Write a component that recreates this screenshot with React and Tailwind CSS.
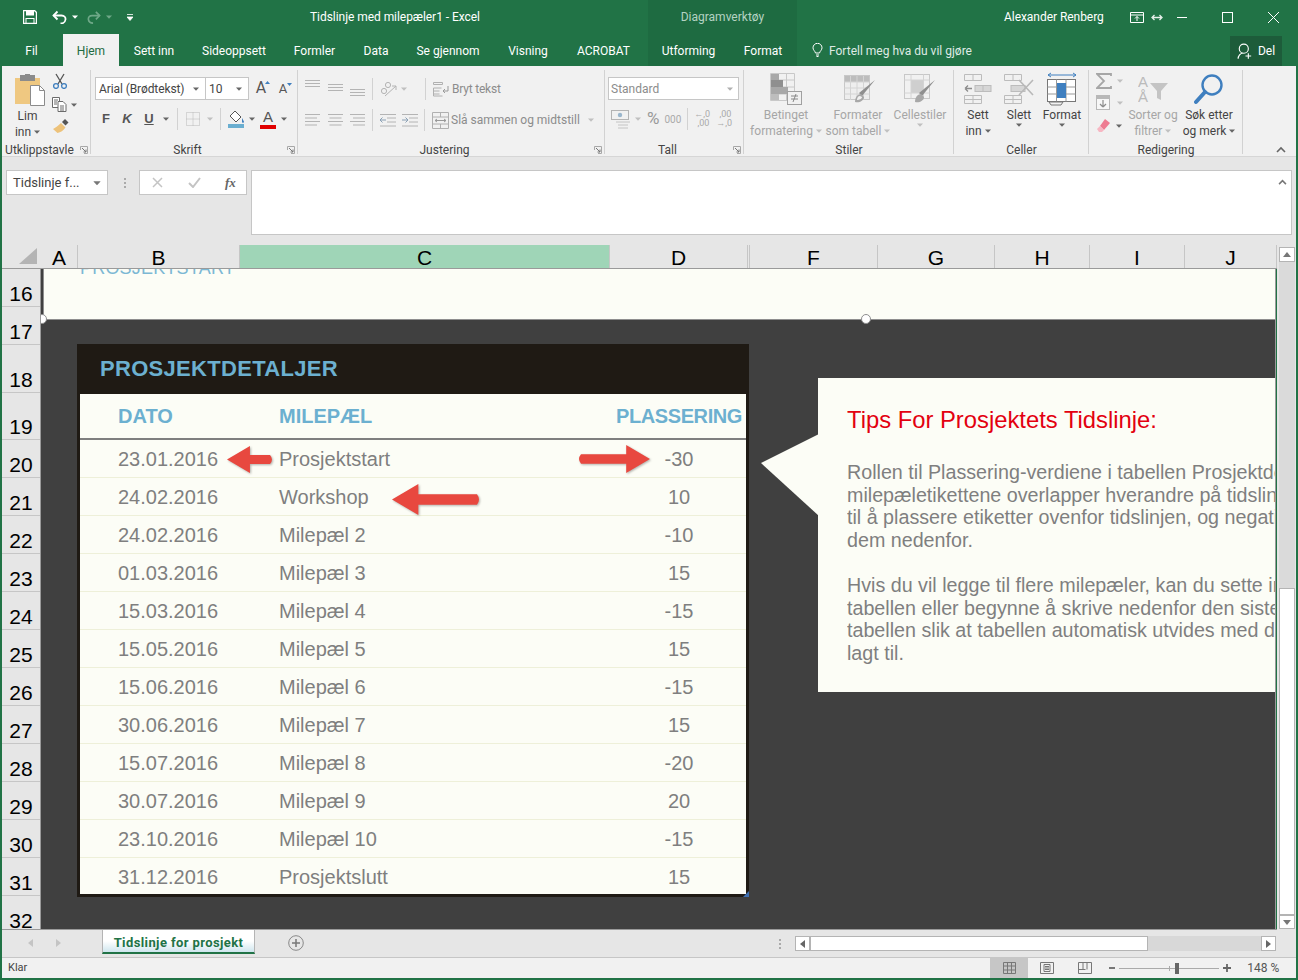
import React from 'react';

const UI = { fontFamily: 'Roboto, "Noto Sans", sans-serif' };
const ARIAL = { fontFamily: '"Liberation Sans", Arial, sans-serif' };

const milestones = [
  ['23.01.2016', 'Prosjektstart', '-30'],
  ['24.02.2016', 'Workshop', '10'],
  ['24.02.2016', 'Milepæl 2', '-10'],
  ['01.03.2016', 'Milepæl 3', '15'],
  ['15.03.2016', 'Milepæl 4', '-15'],
  ['15.05.2016', 'Milepæl 5', '15'],
  ['15.06.2016', 'Milepæl 6', '-15'],
  ['30.06.2016', 'Milepæl 7', '15'],
  ['15.07.2016', 'Milepæl 8', '-20'],
  ['30.07.2016', 'Milepæl 9', '20'],
  ['23.10.2016', 'Milepæl 10', '-15'],
  ['31.12.2016', 'Prosjektslutt', '15'],
];

const rowHeaders = [
  [16, 'h-[38px]'], [17, 'h-[38px]'], [18, 'h-[48px]'], [19, 'h-[47px]'],
  [20, 'h-[38px]'], [21, 'h-[38px]'], [22, 'h-[38px]'], [23, 'h-[38px]'],
  [24, 'h-[38px]'], [25, 'h-[38px]'], [26, 'h-[38px]'], [27, 'h-[38px]'],
  [28, 'h-[38px]'], [29, 'h-[38px]'], [30, 'h-[38px]'], [31, 'h-[38px]'],
  [32, 'h-[38px]'],
];

const colHeaders = [
  ['A', 'w-[37px]'], ['B', 'w-[162px]'], ['C', 'w-[370px] bg-[#9fd5b7]'], ['D', 'w-[138px]'],
  ['', 'w-[2px]'], ['F', 'w-[128px]'], ['G', 'w-[117px]'], ['H', 'w-[95px]'], ['I', 'w-[95px]'], ['J', 'w-[92px]'],
];

const Caret = ({ className = '', color = '#666' }) => (
  <svg width="6" height="4" viewBox="0 0 6 4" className={`inline-block shrink-0 ${className}`}>
    <path d="M0 0.5h6L3 3.8z" fill={color} />
  </svg>
);

const Launcher = () => (
  <svg width="8" height="8" viewBox="0 0 8 8" className="shrink-0">
    <path d="M.5 4V.5H7.5V7.5H4" fill="none" stroke="#a8a8a8" />
    <path d="M2 2l4 4M6 3.5V6H3.5" fill="none" stroke="#777" />
  </svg>
);

const Group = ({ width, label, launcher, children }) => (
  <div className={`${width} shrink-0 flex flex-col relative`}>
    <div className="h-[78px] relative">{children}</div>
    <div className="h-[12px] flex items-center text-[12px] leading-[14px] text-[#444]">
      <div className="flex-1 text-center">{label}</div>
      {launcher && <div className="w-[14px] flex justify-center"><Launcher /></div>}
    </div>
    <div className="absolute right-0 top-[4px] bottom-[2px] w-px bg-[#d2d2d2]" />
  </div>
);

const Sep = ({ className = '' }) => <div className={`w-px h-[22px] bg-[#d2d2d2] shrink-0 ${className}`} />;

const Lines = ({ align = 'left', offset = 0, className = '' }) => {
  const rows = [[0, 15], [1, 12], [2, 15], [3, 12]];
  return (
    <svg width="15" height="13" viewBox="0 0 15 13" className={`shrink-0 ${className}`}>
      {rows.map(([i, w]) => {
        const x = align === 'left' ? 0 : align === 'right' ? 15 - w : (15 - w) / 2;
        return <rect key={i} x={x} y={i * 3.5 + offset} width={w} height="1" fill="#b4b4b4" />;
      })}
    </svg>
  );
};

const VAlign = ({ y, className = '' }) => (
  <svg width="15" height="20" viewBox="0 0 15 20" className={`shrink-0 ${className}`}>
    {[0, 3, 6].map((d) => <rect key={d} x="0" y={y + d} width="15" height="1" fill="#b4b4b4" />)}
  </svg>
);

const Paste = () => (
  <svg width="32" height="32" viewBox="0 0 32 32">
    <rect x="1" y="4" width="25" height="26" fill="#efc881" />
    <rect x="6" y="1" width="15" height="6" fill="#8b8b8b" />
    <rect x="11" y="0" width="5" height="3" fill="#8b8b8b" />
    <path d="M16.5 11.5h9l5 5v15h-14z" fill="#fff" stroke="#8b8b8b" />
    <path d="M25.5 11.5v5h5" fill="none" stroke="#8b8b8b" />
  </svg>
);

const Scissors = () => (
  <svg width="16" height="16" viewBox="0 0 16 16">
    <path d="M4 1l6 10M12 1L6 11" stroke="#555" strokeWidth="1.3" fill="none" />
    <circle cx="4" cy="13" r="2.4" fill="none" stroke="#3f7fbf" strokeWidth="1.3" />
    <circle cx="12" cy="13" r="2.4" fill="none" stroke="#3f7fbf" strokeWidth="1.3" />
  </svg>
);

const Copy = () => (
  <svg width="15" height="15" viewBox="0 0 15 15">
    <path d="M.5 .5h7v10h-7z" fill="#fff" stroke="#6b6b6b" />
    <path d="M6 4.5h5l3 3v7H6z" fill="#fff" stroke="#6b6b6b" />
    <path d="M8 9h4M8 11h4M8 13h4M2 3h4M2 5h3M2 7h3" stroke="#6b6b6b" />
  </svg>
);

const Brush = () => (
  <svg width="18" height="16" viewBox="0 0 18 16">
    <path d="M10 4l3-3 3.5 3.5-3 3z" fill="#555" />
    <path d="M9 5l4.5 4.5c-2 3-5 5-8 5.5L1 11c2-1 5-3 8-6z" fill="#edc27a" />
  </svg>
);

const FontGrow = ({ small, className = '' }) => (
  <span className={`relative inline-flex w-[14px] justify-center text-[#555] ${small ? 'text-[13px]' : 'text-[16px]'} leading-none ${className}`}>
    A
    <svg width="5" height="4" viewBox="0 0 5 4" className="absolute right-[-2px] top-[1px]">
      <path d={small ? 'M0 0h5L2.5 3z' : 'M0 3h5L2.5 0z'} fill="#3f7fbf" />
    </svg>
  </span>
);

const Borders = ({ className = '' }) => (
  <svg width="14" height="14" viewBox="0 0 14 14" className={`shrink-0 ${className}`}>
    <path d="M.5 .5h13v13H.5zM7 .5v13M.5 7h13" fill="none" stroke="#b8b8b8" strokeDasharray="1 1" />
  </svg>
);

const Fill = ({ className = '' }) => (
  <svg width="17" height="19" viewBox="0 0 17 19" className={`shrink-0 ${className}`}>
    <path d="M7 1l6 6-5 5-6-6z" fill="#fff" stroke="#555" />
    <path d="M14 8c1 2 2 3 2 4s-2 1-2 0 0-2 0-4z" fill="#3f7fbf" />
    <rect x="0" y="14" width="16" height="4" fill="#6aaed0" />
  </svg>
);

const FontColor = ({ className = '' }) => (
  <span className={`relative inline-flex flex-col items-center w-[16px] ${className}`}>
    <span className="text-[15px] leading-[14px] font-medium text-[#555]">A</span>
    <span className="w-[16px] h-[4px] bg-[#e00000] mt-[1px]" />
  </span>
);

const Orientation = ({ className = '' }) => (
  <svg width="17" height="17" viewBox="0 0 17 17" className={`shrink-0 ${className}`}>
    <path d="M5 15L16 5M16 5h-4M16 5v4" fill="none" stroke="#b4b4b4" />
    <circle cx="4" cy="10" r="2.6" fill="none" stroke="#b4b4b4" />
    <circle cx="8" cy="4" r="2.6" fill="none" stroke="#b4b4b4" />
  </svg>
);

const WrapIcon = ({ className = '' }) => (
  <svg width="16" height="15" viewBox="0 0 16 15" className={`shrink-0 ${className}`}>
    <path d="M.5 .5h9v2h-9zM.5 6h8M.5 9h6M.5 12h6M.5 6v8h9" fill="none" stroke="#b0b0b0" />
    <path d="M15 4v5h-5M10 9l2-2M10 9l2 2" fill="none" stroke="#999" />
  </svg>
);

const MergeIcon = ({ className = '' }) => (
  <svg width="17" height="17" viewBox="0 0 17 17" className={`shrink-0 ${className}`}>
    <path d="M.5 .5h16v16H.5zM.5 5h16M.5 12h16M8.500 .5V5M8.500 12v4.500" fill="none" stroke="#b0b0b0" />
    <path d="M3 8.500h11M3 8.500l2-1.500M3 8.500l2 1.500M14 8.500l-2-1.500M14 8.500l-2 1.500" fill="none" stroke="#999" />
  </svg>
);

const Indent = ({ flip, className = '' }) => (
  <svg width="16" height="13" viewBox="0 0 16 13" className={`shrink-0 ${className}`}>
    <path d="M0 .5h16M7 4h9M7 8h9M0 12h16" stroke="#b4b4b4" />
    <path d={flip ? 'M0 6h6M6 6L3.500 3.500M6 6L3.500 8.500' : 'M0 6h6M0 6l2.500-2.500M0 6l2.500 2.500'} stroke="#8aa0b4" fill="none" />
  </svg>
);

const Money = ({ className = '' }) => (
  <svg width="21" height="19" viewBox="0 0 21 19" className={`shrink-0 ${className}`}>
    <rect x=".5" y=".5" width="17" height="9" fill="none" stroke="#b4b4b4" />
    <circle cx="9" cy="5" r="2.2" fill="#9ab6cc" />
    <path d="M5 12h14M7 15h10M7 18h10" stroke="#c4c4c4" />
  </svg>
);

const Decimals = ({ more, className = '' }) => (
  <span className={`inline-flex flex-col text-[9px] leading-[9px] text-[#aaa] w-[15px] ${className}`}>
    <span className="text-right">{more ? ',00' : '←,0'}</span>
    <span className="text-right">{more ? '→,0' : ',00'}</span>
  </span>
);

const CondFormat = () => (
  <svg width="32" height="32" viewBox="0 0 32 32">
    <path d="M.5 .5h24v27H.5zM8.500 .5v27M16.500 .5v27M.5 7h24M.5 14h24M.5 21h24" fill="none" stroke="#c8c8c8" />
    <rect x="1" y="1" width="8" height="6" fill="#a8a8a8" />
    <rect x="1" y="7" width="12" height="7" fill="#8f8f8f" />
    <rect x="1" y="14" width="17" height="7" fill="#a8a8a8" />
    <rect x="1" y="21" width="8" height="6" fill="#bdbdbd" />
    <rect x="17.500" y="18.500" width="14" height="13" fill="#f1f1f1" stroke="#a0a0a0" />
    <path d="M21 23h7M21 26h7M26 21l-3 8" stroke="#888" />
  </svg>
);

const TableFormat = () => (
  <svg width="32" height="32" viewBox="0 0 32 32">
    <rect x=".5" y="2.500" width="25" height="24" fill="#eee" stroke="#c8c8c8" />
    <rect x="1" y="3" width="24" height="6" fill="#bdbdbd" />
    <path d="M.5 9h25M.5 15h25M.5 21h25M6.500 3v24M13 3v24M19.500 3v24" stroke="#d4d4d4" fill="none" />
    <path d="M31 7L18 23l-3-3z" fill="#8f8f8f" />
    <path d="M17 21c-4 0-6 4-6 8 4 1 9-1 9-5z" fill="#a8a8a8" />
    <path d="M16 23c-2 0-3 2-3 4 2 0 5-1 5-3z" fill="#f1f1f1" />
  </svg>
);

const CellStyle = () => (
  <svg width="32" height="32" viewBox="0 0 32 32">
    <rect x=".5" y="1.500" width="25" height="24" fill="none" stroke="#c8c8c8" />
    <rect x="7" y="7" width="13" height="13" fill="#cfcfcf" />
    <path d="M.5 7h25M.5 20h25M7 1.500v24M19.500 1.500v24" stroke="#d4d4d4" fill="none" />
    <path d="M31 7L18 23l-3-3z" fill="#8f8f8f" />
    <path d="M17 21c-4 0-6 4-6 8 4 1 9-1 9-5z" fill="#a8a8a8" />
  </svg>
);

const InsertCells = () => (
  <svg width="28" height="30" viewBox="0 0 28 30">
    <path d="M.5 .5h17v6H.5zM9 .5v6M.5 21.500h17v8H.5zM9 21.500v8M.5 25.500h17" fill="none" stroke="#bcbcbc" />
    <rect x="11" y="11.500" width="16" height="6" fill="#d6d6d6" stroke="#bcbcbc" />
    <path d="M19 11.500v6" stroke="#bcbcbc" />
    <path d="M1 14.500h7M1 14.500l3-3M1 14.500l3 3" stroke="#8c8c8c" strokeWidth="1.300" fill="none" />
  </svg>
);

const DeleteCells = () => (
  <svg width="30" height="30" viewBox="0 0 30 30">
    <path d="M.5 .5h17v6H.5zM9 .5v6M.5 21.500h17v8H.5zM9 21.500v8M.5 25.500h17" fill="none" stroke="#bcbcbc" />
    <rect x="7" y="11.500" width="14" height="6" fill="#d6d6d6" stroke="#bcbcbc" />
    <path d="M15 6l14 15M29 6L15 21" stroke="#b8b8b8" strokeWidth="1.600" />
  </svg>
);

const FormatCells = () => (
  <svg width="30" height="34" viewBox="0 0 30 34">
    <path d="M1 2h28M1 2l3-2M1 2l3 2M29 2l-3-2M29 2l-3 2" stroke="#3f7fbf" fill="none" transform="translate(0 1)" />
    <rect x=".5" y="7.500" width="28" height="22" fill="#fff" stroke="#777" />
    <path d="M9.500 7.500v22M19 7.500v22M.5 15h28M.5 22h28" stroke="#999" />
    <rect x="10" y="11" width="9" height="15" fill="#3f7fbf" />
    <path d="M2 30h14l-2 3H4z" fill="#f1f1f1" stroke="#777" />
  </svg>
);

const Sigma = () => (
  <svg width="16" height="16" viewBox="0 0 16 16">
    <path d="M15 3V1H1l7 7-7 7h14v-2" fill="none" stroke="#a6a6a6" strokeWidth="1.800" />
  </svg>
);

const FillDown = () => (
  <svg width="14" height="15" viewBox="0 0 14 15">
    <rect x=".5" y=".5" width="13" height="14" fill="#f7f7f7" stroke="#b8b8b8" />
    <rect x="1" y="1" width="12" height="3" fill="#b8b8b8" />
    <path d="M7 5v7M7 12l-3-3M7 12l3-3" fill="none" stroke="#8c8c8c" strokeWidth="1.200" />
  </svg>
);

const Eraser = () => (
  <svg width="15" height="15" viewBox="0 0 15 15">
    <path d="M9 1l5 4-6 7-4-4z" fill="#ee7b91" />
    <path d="M4 8l4 4-2 2H3l-2-3z" fill="#f7b7c3" />
  </svg>
);

const SortFilter = () => (
  <svg width="31" height="30" viewBox="0 0 31 30">
    <text x="0" y="13" fontSize="15" fill="#bbb" style={ARIAL}>A</text>
    <text x="0" y="28" fontSize="15" fill="#bbb" style={ARIAL}>Å</text>
    <path d="M12 9h18l-7 8v9l-4-2v-7z" fill="#c4c4c4" />
  </svg>
);

const Search = () => (
  <svg width="30" height="32" viewBox="0 0 30 32">
    <circle cx="18" cy="12" r="9.500" fill="none" stroke="#3f7fbf" strokeWidth="2.400" />
    <path d="M11 19L2 29" stroke="#3f7fbf" strokeWidth="4" strokeLinecap="round" />
  </svg>
);

const BigButton = ({ icon, line1, line2, caret, muted, width, className = '' }) => (
  <div className={`flex flex-col items-center shrink-0 ${width} ${className}`}>
    <div className="h-[34px] flex items-center justify-center">{icon}</div>
    <div className={`text-[12px] leading-[16px] mt-[1px] whitespace-nowrap ${muted ? 'text-[#a6a6a6]' : 'text-[#444]'}`}>{line1}</div>
    <div className={`text-[12px] leading-[16px] whitespace-nowrap flex items-center gap-[3px] ${muted ? 'text-[#a6a6a6]' : 'text-[#444]'}`}>
      {line2}
      {caret && <Caret color={muted ? '#c0c0c0' : '#666'} />}
    </div>
  </div>
);

function TitleBar() {
  return (
    <div className="h-[34px] flex text-white text-[12px]">
      <div className="w-[648px] flex items-center relative">
        <svg width="14" height="14" viewBox="0 0 14 14" className="ml-[23px]">
          <path d="M.5 .5h11l2 2v11H.5z" fill="none" stroke="#fff" strokeWidth="1.400" />
          <rect x="3" y="1" width="8" height="4.500" fill="#fff" />
          <rect x="3" y="8.500" width="8" height="5" fill="none" stroke="#fff" />
        </svg>
        <svg width="15" height="14" viewBox="0 0 15 14" className="ml-[15px]">
          <path d="M1.500 5.500h8c6 0 5 8-1 8" fill="none" stroke="#fff" strokeWidth="1.800" />
          <path d="M5.500 1.500l-4 4 4 4" fill="none" stroke="#fff" strokeWidth="1.800" />
        </svg>
        <Caret color="#fff" className="ml-[5px]" />
        <svg width="14" height="14" viewBox="0 0 15 14" className="ml-[9px]">
          <path d="M13.500 5.500h-8c-6 0-5 8 1 8" fill="none" stroke="#6fa888" strokeWidth="1.800" />
          <path d="M9.500 1.500l4 4-4 4" fill="none" stroke="#6fa888" strokeWidth="1.800" />
        </svg>
        <Caret color="#6fa888" className="ml-[5px]" />
        <svg width="6" height="7" viewBox="0 0 6 7" className="ml-[15px]">
          <path d="M0 .5h6M0 3h6L3 6.500z" fill="#fff" stroke="#fff" strokeWidth=".8" />
        </svg>
        <div className="ml-[177px] whitespace-nowrap tracking-[-0.05px]">Tidslinje med milepæler1 - Excel</div>
      </div>
      <div className="w-[149px] bg-[#1e6b41] flex items-center justify-center text-[#b4d3c2]">Diagramverktøy</div>
      <div className="flex-1 flex items-center">
        <div className="ml-[207px] whitespace-nowrap tracking-[-0.05px]">Alexander Renberg</div>
        <svg width="14" height="11" viewBox="0 0 14 11" className="ml-[26px]">
          <path d="M.5 .5h13v10H.5zM.5 3h13" fill="none" stroke="#fff" />
          <path d="M7 9V4.500M5 6.500l2-2 2 2" fill="none" stroke="#fff" />
        </svg>
        <svg width="12" height="7" viewBox="0 0 12 7" className="ml-[7px]">
          <path d="M2 3.500h8M3.500 1L1 3.500 3.500 6M8.500 1L11 3.500 8.500 6" fill="none" stroke="#e8f0eb" strokeWidth="1.300" />
        </svg>
        <div className="w-[10px] h-px bg-white ml-[14px]" />
        <div className="w-[11px] h-[11px] border border-white ml-[35px]" />
        <svg width="11" height="11" viewBox="0 0 11 11" className="ml-[35px]">
          <path d="M0 0l11 11M11 0L0 11" stroke="#fff" />
        </svg>
      </div>
    </div>
  );
}

const tabs = [
  ['Fil', 'w-[63px]'], ['Hjem', 'w-[56px] bg-[#f1f1f1] text-[#1f6b41]'], ['Sett inn', 'w-[70px]'],
  ['Sideoppsett', 'w-[90px]'], ['Formler', 'w-[71px]'], ['Data', 'w-[52px]'], ['Se gjennom', 'w-[92px]'],
  ['Visning', 'w-[68px]'], ['ACROBAT', 'w-[83px] mr-[3px]'], ['Utforming', 'w-[81px] bg-[#1e6b41]'], ['Format', 'w-[68px] bg-[#1e6b41]'],
];

function TabBar() {
  return (
    <div className="h-[32px] flex text-white text-[12px]">
      {tabs.map(([name, cls]) => (
        <div key={name} className={`flex items-center justify-center pt-[1px] ${cls}`}>{name}</div>
      ))}
      <svg width="11" height="14" viewBox="0 0 11 14" className="ml-[15px] mt-[9px]">
        <path d="M3.500 10C3 8 1 7 1 4.800a4.500 4.500 0 0 1 9 0C10 7 8 8 7.500 10zM4 12h3M4.500 13.500h2" fill="none" stroke="#fff" />
      </svg>
      <div className="ml-[6px] pt-[1px] flex items-center text-[#dfeae4] whitespace-nowrap">Fortell meg hva du vil gjøre</div>
      <div className="ml-[258px] mt-[2px] w-[52px] h-[30px] bg-[#1d5c3a] flex items-center justify-center gap-[4px]">
        <svg width="17" height="17" viewBox="0 0 15 15">
          <circle cx="6" cy="5" r="4" fill="none" stroke="#fff" />
          <path d="M1 14c0-3 2-5 4-5M10 9v5M7.500 11.500h5" fill="none" stroke="#fff" />
        </svg>
        Del
      </div>
    </div>
  );
}

function Ribbon() {
  return (
    <div className="h-[91px] bg-[#f1f1f1] flex shrink-0 text-[#444] border-b border-[#d6d6d6]">
      <Group width="w-[89px]" label="Utklippstavle" launcher>
        <div className="flex">
          <div className="w-[50px] flex flex-col items-center pl-[1px] pt-[8px]">
            <div className="ml-[4px]"><Paste /></div>
            <div className="text-[12px] leading-[16px] mt-[2px]">Lim</div>
            <div className="text-[12px] leading-[16px] flex items-center gap-[3px]">inn <Caret /></div>
          </div>
          <div className="flex flex-col pt-[7px]">
            <Scissors />
            <div className="flex items-center gap-[4px] mt-[8px]"><Copy /><Caret /></div>
            <div className="mt-[6px]"><Brush /></div>
          </div>
        </div>
      </Group>

      <Group width="w-[207px]" label="Skrift" launcher>
        <div className="flex items-center mt-[11px] ml-[4px] h-[22px]">
          <div className="w-[111px] h-[23px] bg-white border border-[#c6c6c6] flex items-center pl-[3px] pr-[6px] pt-[1px] justify-between text-[12px] tracking-[-0.1px]">
            Arial (Brødtekst) <Caret />
          </div>
          <div className="w-[43px] h-[23px] bg-white border border-l-0 border-[#c6c6c6] flex items-center pl-[3px] pr-[6px] pt-[1px] justify-between text-[12px]">
            10 <Caret />
          </div>
          <FontGrow className="ml-[5px]" />
          <FontGrow small className="ml-[8px]" />
        </div>
        <div className="flex items-center mt-[9px] h-[22px] text-[13px]" style={ARIAL}>
          <span className="ml-[10px] font-bold w-[10px] text-center text-[#555]">F</span>
          <span className="ml-[11px] font-bold italic w-[10px] text-center text-[#555]">K</span>
          <span className="ml-[12px] font-bold underline w-[10px] text-center text-[#555]">U</span>
          <Caret className="ml-[9px]" />
          <Sep className="ml-[8px]" />
          <Borders className="ml-[8px]" />
          <Caret color="#c0c0c0" className="ml-[7px]" />
          <Sep className="ml-[7px]" />
          <Fill className="ml-[7px]" />
          <Caret className="ml-[4px]" />
          <FontColor className="ml-[5px]" />
          <Caret className="ml-[5px]" />
        </div>
      </Group>

      <Group width="w-[307px]" label="Justering" launcher>
        <div className="flex items-center mt-[11px] h-[24px]">
          <VAlign y={1} className="ml-[7px]" />
          <VAlign y={5} className="ml-[8px]" />
          <VAlign y={10} className="ml-[7px]" />
          <Sep className="ml-[7px]" />
          <Orientation className="ml-[7px]" />
          <Caret color="#c0c0c0" className="ml-[4px]" />
          <Sep className="ml-[18px]" />
          <WrapIcon className="ml-[7px]" />
          <span className="ml-[3px] text-[12px] text-[#8c8c8c] whitespace-nowrap tracking-[-0.2px]">Bryt tekst</span>
        </div>
        <div className="flex items-center mt-[8px] h-[22px]">
          <Lines className="ml-[7px]" />
          <Lines align="center" className="ml-[8px]" />
          <Lines align="right" className="ml-[7px]" />
          <Sep className="ml-[7px]" />
          <Indent className="ml-[7px]" />
          <Indent flip className="ml-[6px]" />
          <Sep className="ml-[6px]" />
          <MergeIcon className="ml-[7px]" />
          <span className="ml-[2px] text-[12px] text-[#8c8c8c] whitespace-nowrap">Slå sammen og midtstill</span>
          <Caret color="#c0c0c0" className="ml-[8px]" />
        </div>
      </Group>

      <Group width="w-[139px]" label="Tall" launcher>
        <div className="mt-[11px] ml-[3px] w-[131px] h-[23px] bg-white border border-[#c6c6c6] flex items-center justify-between pl-[2px] pr-[5px] text-[12px] text-[#8c8c8c]">
          Standard <Caret color="#b0b0b0" />
        </div>
        <div className="flex items-center mt-[8px] h-[22px]">
          <Money className="ml-[6px]" />
          <Caret color="#c0c0c0" className="ml-[3px]" />
          <span className="ml-[6px] text-[17px] text-[#999]">%</span>
          <span className="ml-[5px] text-[10px] text-[#aaa]">000</span>
          <Sep className="ml-[6px]" />
          <Decimals className="ml-[6px]" />
          <Decimals more className="ml-[7px]" />
        </div>
      </Group>

      <Group width="w-[210px]" label="Stiler">
        <div className="flex pt-[6px]">
          <BigButton muted caret width="w-[80px] ml-[2px]" icon={<CondFormat />} line1="Betinget" line2="formatering" />
          <BigButton muted caret width="w-[70px] -ml-[3px]" icon={<div className="ml-[3px]"><TableFormat /></div>} line1="Formater" line2="som tabell" />
          <BigButton muted width="w-[66px] -ml-[6px]" icon={<CellStyle />} line1="Cellestiler" line2={<Caret color="#c0c0c0" />} />
        </div>
      </Group>

      <Group width="w-[135px]" label="Celler">
        <div className="flex pt-[6px]">
          <BigButton caret width="w-[42px] ml-[3px]" icon={<InsertCells />} line1="Sett" line2="inn" />
          <BigButton width="w-[40px]" icon={<DeleteCells />} line1="Slett" line2={<Caret />} />
          <BigButton width="w-[46px]" icon={<FormatCells />} line1="Format" line2={<Caret />} />
        </div>
      </Group>

      <Group width="w-[154px]" label="Redigering">
        <div className="flex pt-[6px]">
          <div className="w-[36px] pl-[7px] pt-[1px] flex flex-col">
            <div className="flex items-center gap-[5px]"><Sigma /><Caret color="#c0c0c0" /></div>
            <div className="flex items-center gap-[7px] mt-[6px]"><FillDown /><Caret color="#c0c0c0" /></div>
            <div className="flex items-center gap-[5px] mt-[8px]"><Eraser /><Caret /></div>
          </div>
          <BigButton muted caret width="w-[56px]" icon={<SortFilter />} line1="Sorter og" line2="filtrer" />
          <BigButton caret width="w-[54px] ml-[1px]" icon={<Search />} line1="Søk etter" line2="og merk" />
        </div>
      </Group>

      <div className="flex-1 flex items-end justify-end pr-[10px] pb-[3px]">
        <svg width="10" height="7" viewBox="0 0 10 7">
          <path d="M1 6l4-4 4 4" fill="none" stroke="#666" strokeWidth="1.600" />
        </svg>
      </div>
    </div>
  );
}

function FormulaBar() {
  return (
    <div className="h-[88px] bg-[#e6e6e6] flex items-start pt-[13px] shrink-0">
      <div className="ml-[4px] w-[102px] h-[25px] bg-white border border-[#c6c6c6] flex items-center justify-between pl-[6px] pr-[7px] text-[13px] text-[#444]">
        Tidslinje f... <Caret color="#777" className="scale-125" />
      </div>
      <div className="ml-[15px] w-[3px] h-[25px] flex flex-col items-center justify-center gap-[2px]">
        <span className="w-[2px] h-[2px] bg-[#aaa]" />
        <span className="w-[2px] h-[2px] bg-[#aaa]" />
        <span className="w-[2px] h-[2px] bg-[#aaa]" />
      </div>
      <div className="ml-[13px] w-[108px] h-[25px] bg-white border border-[#c6c6c6] flex items-center">
        <svg width="11" height="11" viewBox="0 0 11 11" className="ml-[12px]">
          <path d="M1 1l9 9M10 1l-9 9" stroke="#c4c4c4" strokeWidth="1.500" />
        </svg>
        <svg width="13" height="11" viewBox="0 0 13 11" className="ml-[25px]">
          <path d="M1 6l4 4 7-9" fill="none" stroke="#c4c4c4" strokeWidth="2" />
        </svg>
        <span className="ml-[24px] text-[13px] italic font-bold text-[#666]" style={{ fontFamily: '"Liberation Serif", serif' }}>fx</span>
      </div>
      <div className="ml-[4px] w-[1041px] h-[65px] bg-white border border-[#c6c6c6] flex justify-end pt-[8px] pr-[4px]">
        <svg width="9" height="6" viewBox="0 0 10 7">
          <path d="M1 6l4-4 4 4" fill="none" stroke="#777" strokeWidth="1.800" />
        </svg>
      </div>
    </div>
  );
}

const Arrow = ({ w, h, flip, className }) => (
  <svg width={w} height={h} viewBox={`0 0 ${w} ${h}`} className={`absolute drop-shadow-[1px_1px_1px_rgba(0,0,0,0.3)] ${className}`}>
    <path
      d={`M0 ${h / 2} L${h * 0.85} 0 L${h * 0.85} ${h * 0.33} L${w - 4} ${h * 0.33} Q${w} ${h / 2} ${w - 4} ${h * 0.67} L${h * 0.85} ${h * 0.67} L${h * 0.85} ${h} Z`}
      fill="#e8483f"
      transform={flip ? `translate(${w} 0) scale(-1 1)` : undefined}
    />
  </svg>
);

function ProjectTable() {
  return (
    <div className="w-[672px] h-[553px] bg-[#1f1a14] shrink-0 relative" style={ARIAL}>
      <div className="h-[50px] flex items-center pl-[23px] pb-[2px] text-[22px] font-bold text-[#6cb0d0] tracking-[0.3px]">PROSJEKTDETALJER</div>
      <div className="mx-[3px] h-[500px] bg-[#fcfdf6] overflow-hidden text-[20px] text-[#7f7f7f]">
        <div className="h-[46px] grid grid-cols-[160px_370px_138px] items-center font-bold text-[#6cb0d0] border-b-2 border-[#7f7f7f]">
          <div className="pl-[38px]">DATO</div>
          <div className="pl-[39px]">MILEPÆL</div>
          <div className="text-center whitespace-nowrap tracking-[-0.4px]">PLASSERING</div>
        </div>
        {milestones.map(([date, name, pos], i) => (
          <div key={i} className="h-[38px] grid grid-cols-[160px_370px_138px] items-center border-b border-[#eef0d9]">
            <div className="pl-[38px]">{date}</div>
            <div className="pl-[39px]">{name}</div>
            <div className="text-center">{pos}</div>
          </div>
        ))}
      </div>
      <Arrow w={47} h={27} className="left-[150px] top-[102px]" />
      <Arrow w={89} h={31} className="left-[315px] top-[140px]" />
      <Arrow w={73} h={28} flip className="left-[500px] top-[101px]" />
      <svg width="6" height="6" viewBox="0 0 6 6" className="absolute right-0 bottom-0">
        <path d="M0 6L6 0v6z" fill="#3f6fb0" />
      </svg>
    </div>
  );
}

function Callout() {
  return (
    <div className="ml-[69px] mt-[34px] w-[458px] h-[314px] bg-[#fcfdf6] relative shrink-0 pl-[29px] pt-[26px] text-[#7f7f7f]" style={ARIAL}>
      <svg width="58" height="82" viewBox="0 0 58 82" className="absolute left-[-57px] top-[56px]">
        <path d="M58 0L0 29l58 53z" fill="#fcfdf6" />
      </svg>
      <div className="overflow-hidden">
        <div className="text-[23.8px] leading-[32px] text-[#e3000f] whitespace-nowrap">Tips For Prosjektets Tidslinje:</div>
        <div className="mt-[25px] text-[19.7px] leading-[22.700px] whitespace-nowrap">
          <div>Rollen til Plassering-verdiene i tabellen Prosjektdetaljer</div>
          <div>milepæletikettene overlapper hverandre på tidslinjen</div>
          <div>til å plassere etiketter ovenfor tidslinjen, og negative</div>
          <div>dem nedenfor.</div>
          <div className="mt-[22px]">Hvis du vil legge til flere milepæler, kan du sette inn</div>
          <div>tabellen eller begynne å skrive nedenfor den siste</div>
          <div>tabellen slik at tabellen automatisk utvides med de</div>
          <div>lagt til.</div>
        </div>
      </div>
    </div>
  );
}

function Sheet() {
  return (
    <div className="flex-1 min-w-0 flex flex-col" style={ARIAL}>
      <div className="h-[24px] bg-[#e6e6e6] flex shrink-0 border-b border-[#9a9a9a] relative">
        <div className="w-[39px] flex items-end justify-end pr-[4px] pb-[4px]">
          <svg width="18" height="16" viewBox="0 0 18 16"><path d="M18 0v16H0z" fill="#b4b4b4" /></svg>
        </div>
        {colHeaders.map(([name, cls], i) => (
          <div key={i} className={`${cls} shrink-0 flex items-start justify-center text-[21px] leading-[26px] text-black border-r border-[#c6c6c6]`}>{name}</div>
        ))}
      </div>
      <div className="h-[661px] flex overflow-hidden border-b border-[#9a9a9a]">
        <div className="w-[39px] shrink-0 bg-[#e6e6e6] border-r border-[#9a9a9a] overflow-hidden">
          {rowHeaders.map(([n, h]) => (
            <div key={n} className={`${h} flex items-end justify-center text-[21px] leading-[24px] text-black border-b border-[#c6c6c6]`}>{n}</div>
          ))}
        </div>
        <div className="w-[1235px] shrink-0 bg-[#404040] relative overflow-hidden border-r border-[#9a9a9a]">
          <div className="h-[51px] ml-[2px] bg-[#fcfdf6] border-l border-b border-[#8e8e8e] overflow-hidden">
            <div className="ml-[36px] -mt-[13px] text-[18px] leading-[24px] text-[#7cb8d4] tracking-[0.2px] whitespace-nowrap">PROSJEKTSTART</div>
          </div>
          <div className="flex pl-[36px] pt-[24px]">
            <ProjectTable />
            <Callout />
          </div>
          <span className="absolute left-[-4px] top-[45px] w-[10px] h-[10px] rounded-full bg-white border border-[#8e8e8e]" />
          <span className="absolute left-[820px] top-[45px] w-[10px] h-[10px] rounded-full bg-white border border-[#8e8e8e]" />
        </div>
      </div>
    </div>
  );
}

function VScroll() {
  return (
    <div className="w-[19px] bg-[#e6e6e6] shrink-0 pt-[2px] pl-[2px] pr-[1px] flex flex-col">
      <div className="h-[15px] bg-white border border-[#b4b4b4] flex items-center justify-center">
        <svg width="8" height="5" viewBox="0 0 8 5"><path d="M0 5l4-5 4 5z" fill="#777" /></svg>
      </div>
      <div className="h-[326px] bg-[#dadada]" />
      <div className="h-[327px] bg-white border border-[#b4b4b4]" />
      <div className="h-[14px] bg-white border border-[#b4b4b4] flex items-center justify-center">
        <svg width="8" height="5" viewBox="0 0 8 5"><path d="M0 0l4 5 4-5z" fill="#777" /></svg>
      </div>
    </div>
  );
}

function SheetTabs() {
  return (
    <div className="h-[27px] bg-[#e6e6e6] flex shrink-0 text-[12px]">
      <svg width="5" height="8" viewBox="0 0 5 8" className="ml-[26px] mt-[9px]"><path d="M5 0L0 4l5 4z" fill="#c4c4c4" /></svg>
      <svg width="5" height="8" viewBox="0 0 5 8" className="ml-[23px] mt-[9px]"><path d="M0 0l5 4-5 4z" fill="#c4c4c4" /></svg>
      <div className="ml-[41px] w-[153px] h-[24px] pt-[3px] bg-gradient-to-b from-white via-white to-[#cfe6ee] border-x border-[#b4b4b4] border-b-2 border-b-[#217346] flex items-center justify-center font-bold text-[#217346] text-[13px] tracking-[0.4px]" style={UI}>
        Tidslinje for prosjekt
      </div>
      <svg width="16" height="16" viewBox="0 0 16 16" className="ml-[33px] mt-[5px]">
        <circle cx="8" cy="8" r="7.300" fill="none" stroke="#888" />
        <path d="M8 4v8M4 8h8" stroke="#777" strokeWidth="1.500" />
      </svg>
      <div className="ml-[475px] mt-[9px] w-[2px] flex flex-col gap-[2px] items-center">
        <span className="w-[2px] h-[2px] bg-[#aaa]" />
        <span className="w-[2px] h-[2px] bg-[#aaa]" />
        <span className="w-[2px] h-[2px] bg-[#aaa]" />
      </div>
      <div className="ml-[14px] mt-[6px] h-[15px] flex">
        <div className="w-[15px] bg-white border border-[#b4b4b4] flex items-center justify-center">
          <svg width="5" height="8" viewBox="0 0 5 8"><path d="M5 0L0 4l5 4z" fill="#666" /></svg>
        </div>
        <div className="w-[338px] bg-white border border-[#b4b4b4]" />
        <div className="w-[113px] bg-[#d8d8d8]" />
        <div className="w-[15px] bg-white border border-[#b4b4b4] flex items-center justify-center">
          <svg width="5" height="8" viewBox="0 0 5 8"><path d="M0 0l5 4-5 4z" fill="#666" /></svg>
        </div>
      </div>
    </div>
  );
}

function StatusBar() {
  return (
    <div className="h-[21px] bg-[#f1f1f1] border-t border-[#c6c6c6] flex items-stretch shrink-0 text-[11px] text-[#444]">
      <div className="ml-[6px] pt-[1px] flex items-center">Klar</div>
      <div className="ml-[963px] w-[38px] bg-[#c6c6c6] flex items-center justify-center">
        <svg width="13" height="12" viewBox="0 0 13 12">
          <path d="M.5 .5h12v11H.5zM4.500 .5v11M8.500 .5v11M.5 4h12M.5 8h12" fill="none" stroke="#777" />
        </svg>
      </div>
      <div className="ml-[12px] flex items-center">
        <svg width="14" height="12" viewBox="0 0 14 12">
          <path d="M.5 .5h13v11H.5zM4 2.500h6v7H4zM5 4.500h4M5 6h4M5 7.500h4" fill="none" stroke="#777" />
        </svg>
      </div>
      <div className="ml-[24px] flex items-center">
        <svg width="14" height="12" viewBox="0 0 14 12">
          <path d="M.5 .5h13v11H.5zM.5 7.500h7M5 .5v7M9 .5v7" fill="none" stroke="#777" />
        </svg>
      </div>
      <div className="ml-[17px] flex items-center">
        <div className="w-[6px] h-[2px] bg-[#777]" />
        <div className="ml-[4px] w-[100px] h-px bg-[#aaa] relative">
          <span className="absolute left-[50px] top-[-2px] w-px h-[5px] bg-[#aaa]" />
          <span className="absolute left-[56px] top-[-5px] w-[4px] h-[11px] bg-[#666]" />
        </div>
        <svg width="8" height="8" viewBox="0 0 8 8" className="ml-[4px]"><path d="M4 0v8M0 4h8" stroke="#666" strokeWidth="1.800" /></svg>
      </div>
      <div className="ml-[16px] flex items-center text-[12px] text-[#555] whitespace-nowrap">148 %</div>
    </div>
  );
}

export default function App() {
  return (
    <div className="w-[1298px] h-[980px] bg-[#217346] overflow-hidden flex flex-col" style={UI}>
      <TitleBar />
      <TabBar />
      <div className="mx-[2px] mb-[2px] flex-1 min-h-0 flex flex-col">
        <Ribbon />
        <FormulaBar />
        <div className="flex shrink-0">
          <Sheet />
          <VScroll />
        </div>
        <SheetTabs />
        <StatusBar />
      </div>
    </div>
  );
}
